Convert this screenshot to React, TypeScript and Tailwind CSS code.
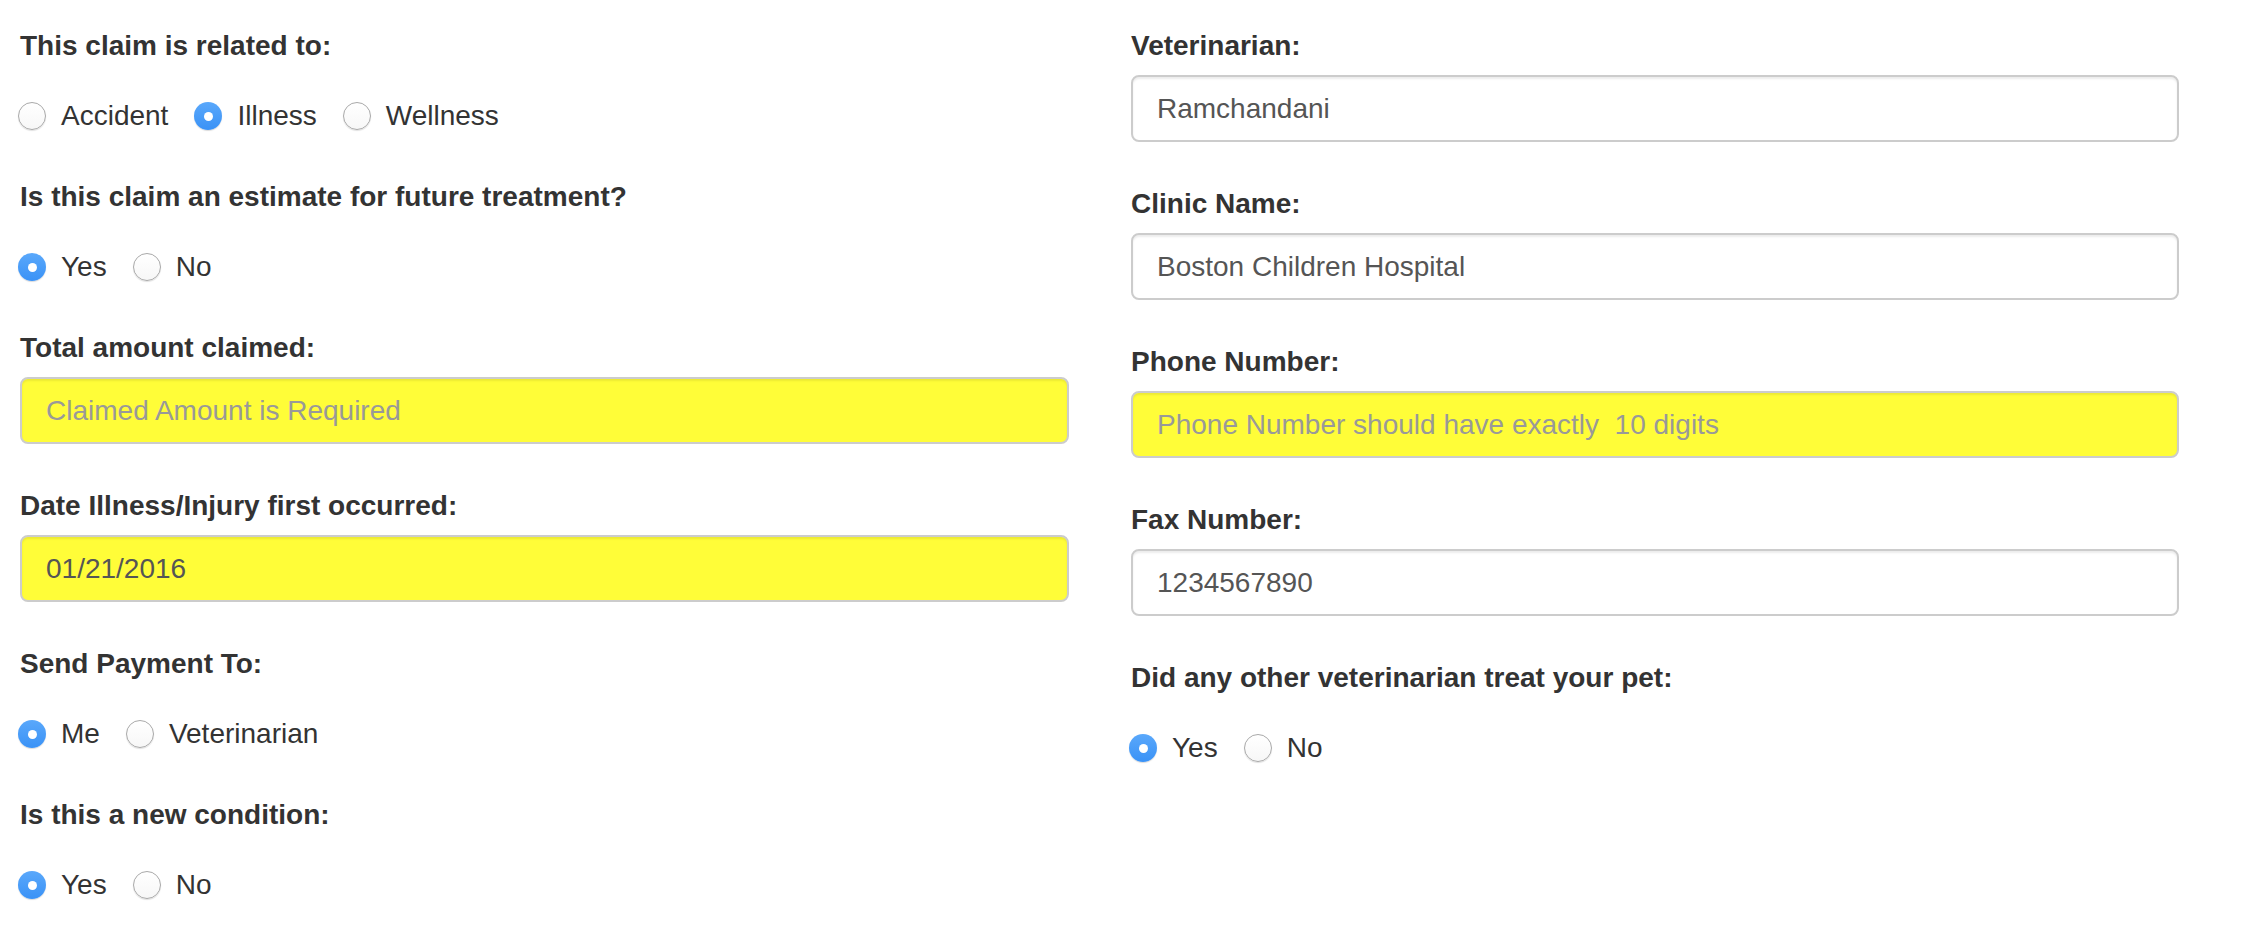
import React from "react";

type Opt = { label: string; checked?: boolean };

function Radio({ checked }: { checked?: boolean }) {
  if (checked) {
    return (
      <span className="relative -ml-[2px] flex h-[28px] w-[28px] shrink-0 items-center justify-center rounded-full bg-[linear-gradient(#5aa8fb,#3a92f6)] shadow-[0_1px_1px_rgba(0,0,0,0.15)]">
        <span className="h-[9px] w-[9px] rounded-full bg-white" />
      </span>
    );
  }
  return (
    <span className="-ml-[2px] block h-[28px] w-[28px] shrink-0 rounded-full border border-[#a9a9a9] bg-[linear-gradient(#ffffff,#f7f7f7)] shadow-[0_1px_1px_rgba(0,0,0,0.12)]" />
  );
}

function Label({ children }: { children: React.ReactNode }) {
  return (
    <div className="h-[40px] whitespace-nowrap text-[28px] font-bold leading-[40px] text-[#333]">
      {children}
    </div>
  );
}

function RadioField({ label, options }: { label: string; options: Opt[] }) {
  return (
    <div className="mb-[41px]">
      <Label>{label}</Label>
      <div className="mt-[30px] flex h-[40px] items-center gap-[28px]">
        {options.map((o) => (
          <div key={o.label} className="flex items-center gap-[15px]">
            <Radio checked={o.checked} />
            <span className="text-[28px] leading-[40px] text-[#333]">{o.label}</span>
          </div>
        ))}
      </div>
    </div>
  );
}

function InputField({
  label,
  value,
  placeholder,
  yellow,
}: {
  label: string;
  value?: string;
  placeholder?: string;
  yellow?: boolean;
}) {
  return (
    <div className="mb-[42px]">
      <Label>{label}</Label>
      <div
        className={
          "mt-[9px] flex h-[67px] w-full items-center rounded-[8px] border-2 border-[#cccccc] px-[24px] text-[28px] shadow-[inset_0_2px_2px_rgba(0,0,0,0.075)] " +
          (yellow ? "bg-[#fffd38]" : "bg-white")
        }
      >
        {value ? (
          <span className="whitespace-pre text-[#555]">{value}</span>
        ) : (
          <span className="whitespace-pre text-[#999]">{placeholder}</span>
        )}
      </div>
    </div>
  );
}

export default function App() {
  return (
    <div
      className="min-h-[940px] w-[2252px] bg-white"
      style={{ fontFamily: '"Liberation Sans", Arial, Helvetica, sans-serif' }}
    >
      <div className="flex gap-[62px] pl-[20px] pt-[26px]">
        <div className="w-[1049px] shrink-0">
          <RadioField
            label="This claim is related to:"
            options={[{ label: "Accident" }, { label: "Illness", checked: true }, { label: "Wellness" }]}
          />
          <RadioField
            label="Is this claim an estimate for future treatment?"
            options={[{ label: "Yes", checked: true }, { label: "No" }]}
          />
          <InputField label="Total amount claimed:" placeholder="Claimed Amount is Required" yellow />
          <InputField label="Date Illness/Injury first occurred:" value="01/21/2016" yellow />
          <RadioField
            label="Send Payment To:"
            options={[{ label: "Me", checked: true }, { label: "Veterinarian" }]}
          />
          <RadioField
            label="Is this a new condition:"
            options={[{ label: "Yes", checked: true }, { label: "No" }]}
          />
        </div>
        <div className="w-[1048px] shrink-0">
          <InputField label="Veterinarian:" value="Ramchandani" />
          <InputField label="Clinic Name:" value="Boston Children Hospital" />
          <InputField
            label="Phone Number:"
            placeholder="Phone Number should have exactly  10 digits"
            yellow
          />
          <InputField label="Fax Number:" value="1234567890" />
          <RadioField
            label="Did any other veterinarian treat your pet:"
            options={[{ label: "Yes", checked: true }, { label: "No" }]}
          />
        </div>
      </div>
    </div>
  );
}
